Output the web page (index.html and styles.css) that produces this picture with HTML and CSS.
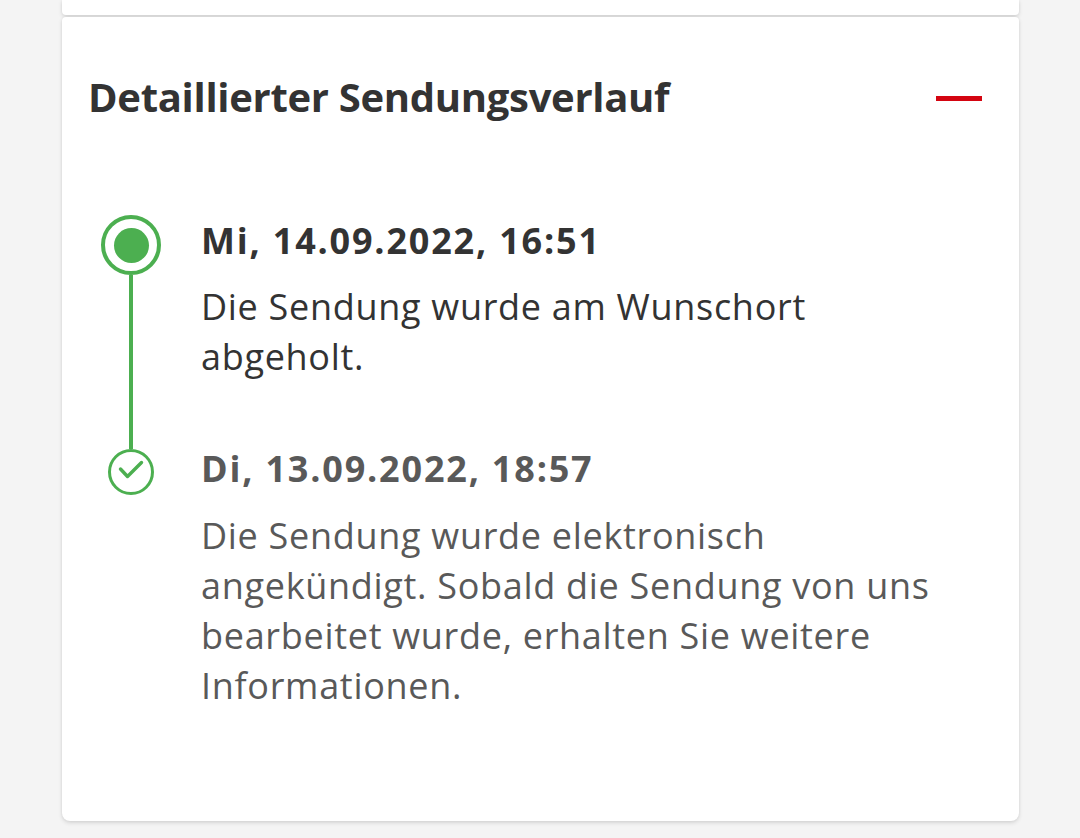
FILE: index.html
```html
<!DOCTYPE html>
<html lang="de">
<head>
<meta charset="utf-8">
<title>Detaillierter Sendungsverlauf</title>
<link rel="stylesheet" href="styles.css">
</head>
<body>
<div class="page">
  <div class="card card-prev"></div>
  <section class="card card-main">
    <header class="card-head">
      <h2 class="title">Detaillierter Sendungsverlauf</h2>
      <span class="collapse" aria-label="Einklappen"></span>
    </header>
    <ol class="timeline">
      <li class="event event-current">
        <div class="marker">
          <span class="dot-ring"><span class="dot"></span></span>
          <span class="line"></span>
        </div>
        <div class="event-body">
          <h3 class="event-date">Mi, 14.09.2022, 16:51</h3>
          <p class="event-text">Die Sendung wurde am Wunschort abgeholt.</p>
        </div>
      </li>
      <li class="event event-past">
        <div class="marker">
          <span class="check-ring">
            <svg viewBox="0 0 40 40" width="40" height="40"><path d="M9.5 17 L16.5 24.5 L30.5 10.5" fill="none" stroke="#4caf50" stroke-width="3.4" stroke-linecap="round" stroke-linejoin="round"/></svg>
          </span>
        </div>
        <div class="event-body">
          <h3 class="event-date">Di, 13.09.2022, 18:57</h3>
          <p class="event-text">Die Sendung wurde elektronisch angekündigt. Sobald die Sendung von uns bearbeitet wurde, erhalten Sie weitere Informationen.</p>
        </div>
      </li>
    </ol>
  </section>
</div>
</body>
</html>
```
FILE: styles.css
```css
html, body {
  margin: 0;
  padding: 0;
  background: #f4f4f4;
  height: 838px;
  overflow: hidden;
}
.page {
  padding: 0 61px 0 62px;
  font-family: "Open Sans", "Noto Sans", sans-serif;
  color: #333;
}
.card {
  background: #fff;
  box-shadow: 0 2px 4px rgba(0,0,0,0.12), 0 0 3px rgba(0,0,0,0.06);
}
.card-prev {
  height: 15px;
  border-radius: 0 0 4px 4px;
}
.card-main {
  margin-top: 2px;
  height: 804px;
  box-sizing: border-box;
  border-radius: 4px 4px 8px 8px;
  padding: 0 37px 0 26px;
}
.card-head {
  display: flex;
  align-items: center;
  justify-content: space-between;
  height: 158px;
}
.title {
  margin: 0;
  font-size: 40px;
  font-weight: 700;
  letter-spacing: -0.3px;
  color: #333;
}
.collapse {
  width: 46px;
  height: 5px;
  background: #d40511;
  margin-top: 4px;
}
.timeline {
  list-style: none;
  margin: 40px 0 0;
  padding: 0;
}
.event {
  display: flex;
}
.marker {
  width: 113px;
  flex: none;
  display: flex;
  flex-direction: column;
  align-items: flex-start;
}
.dot-ring {
  width: 60px;
  height: 60px;
  margin-left: 13px;
  box-sizing: border-box;
  border: 4px solid #4caf50;
  border-radius: 50%;
  display: flex;
  align-items: center;
  justify-content: center;
}
.dot {
  width: 35px;
  height: 35px;
  border-radius: 50%;
  background: #4caf50;
}
.line {
  flex: 1;
  width: 4px;
  margin-left: 41px;
  background: #4caf50;
}
.check-ring {
  width: 46px;
  height: 46px;
  margin-left: 20px;
  box-sizing: border-box;
  border: 3px solid #4caf50;
  border-radius: 50%;
  display: flex;
  align-items: center;
  justify-content: center;
}
.event-body {
  flex: 1;
  max-width: 745px;
}
.event-current .event-body {
  padding-bottom: 67px;
}
.event-date {
  margin: 0;
  font-size: 36px;
  font-weight: 700;
  letter-spacing: 1.8px;
  line-height: 52px;
}
.event-text {
  margin: 15px 0 0;
  font-size: 36px;
  letter-spacing: 0.7px;
  line-height: 50px;
}
.event-past .event-date,
.event-past .event-text {
  color: #595959;
}
.event-past .event-date {
  line-height: 40px;
}
.event-past .event-text {
  margin-top: 22px;
}
```
